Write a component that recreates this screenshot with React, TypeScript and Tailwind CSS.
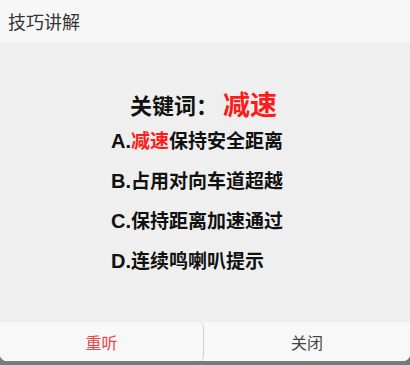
import React from "react";

const cjk = "font-['Noto_Sans_CJK_SC','Noto_Sans',sans-serif]";

const options = [
  { key: "A", parts: [{ t: "减速", red: true }, { t: "保持安全距离" }] },
  { key: "B", parts: [{ t: "占用对向车道超越" }] },
  { key: "C", parts: [{ t: "保持距离加速通过" }] },
  { key: "D", parts: [{ t: "连续鸣喇叭提示" }] },
];

export default function App() {
  return (
    <div className={`w-[410px] h-[365px] bg-[#7a7a7a] overflow-hidden ${cjk}`}>
      <div className="h-[361px] flex flex-col rounded-b-[7px] overflow-hidden bg-[#efefef]">
        {/* header */}
        <div className="h-[42px] shrink-0 bg-[#f7f7f7] flex items-center pl-[8px] text-[18px] text-[#333]">
          技巧讲解
        </div>

        {/* body */}
        <div className="flex-1 flex flex-col">
          <div className="mt-[46px] h-[32px] flex items-center pl-[130px]">
            <span className="text-[22px] font-bold text-[#111]">关键词：</span>
            <span className="ml-[5px] text-[27px] font-bold text-[#ff1a1a]">减速</span>
          </div>
          <div className="pl-[111px] flex flex-col">
            {options.map((o) => (
              <div key={o.key} className="h-[40px] flex items-center">
                <p className="text-[19px] font-bold text-[#111] leading-[24px]">
                  <span className="font-['Liberation_Sans',sans-serif] text-[20px] leading-[24px]">
                    {o.key}.
                  </span>
                  {o.parts.map((p, i) => (
                    <span key={i} className={p.red ? "text-[#ff1a1a]" : ""}>
                      {p.t}
                    </span>
                  ))}
                </p>
              </div>
            ))}
          </div>
        </div>

        {/* buttons */}
        <div className="h-[39px] shrink-0 flex bg-[#f8f8f8]">
          <button className="w-[204px] h-full bg-[#f8f8f8] border-r border-[#cfcfcf] rounded-r-[5px] text-[16px] text-[#e84545]">
            重听
          </button>
          <button className="flex-1 h-full text-[16px] text-[#444]">关闭</button>
        </div>
      </div>
    </div>
  );
}
